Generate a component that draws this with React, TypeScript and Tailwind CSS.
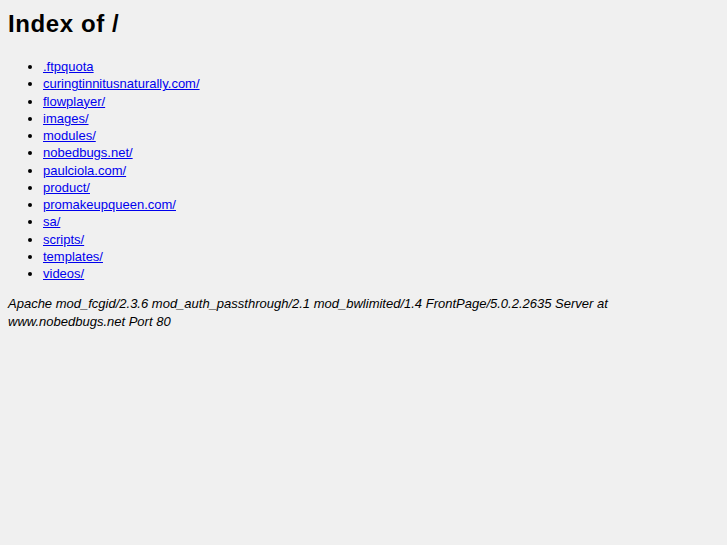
const ENTRIES = [
  '.ftpquota',
  'curingtinnitusnaturally.com/',
  'flowplayer/',
  'images/',
  'modules/',
  'nobedbugs.net/',
  'paulciola.com/',
  'product/',
  'promakeupqueen.com/',
  'sa/',
  'scripts/',
  'templates/',
  'videos/',
]

export default function App() {
  return (
    <div className="min-h-[545px] bg-[#f0f0f0] px-2 pt-[10px] text-black font-['Liberation_Sans',Arial,sans-serif]">
      <h1 className="text-[24px] font-bold leading-[28px] tracking-[0.6px]">Index of /</h1>
      <ul className="mt-[20px] list-disc pl-[35px] text-[13px] leading-[17.25px]">
        {ENTRIES.map((name) => (
          <li key={name}>
            <a href="#" className="text-[#0000ee] underline">
              {name}
            </a>
          </li>
        ))}
      </ul>
      <address className="mt-[13px] text-[13px] italic leading-[18px]">
        Apache mod_fcgid/2.3.6 mod_auth_passthrough/2.1 mod_bwlimited/1.4 FrontPage/5.0.2.2635 Server at
        www.nobedbugs.net Port 80
      </address>
    </div>
  )
}
